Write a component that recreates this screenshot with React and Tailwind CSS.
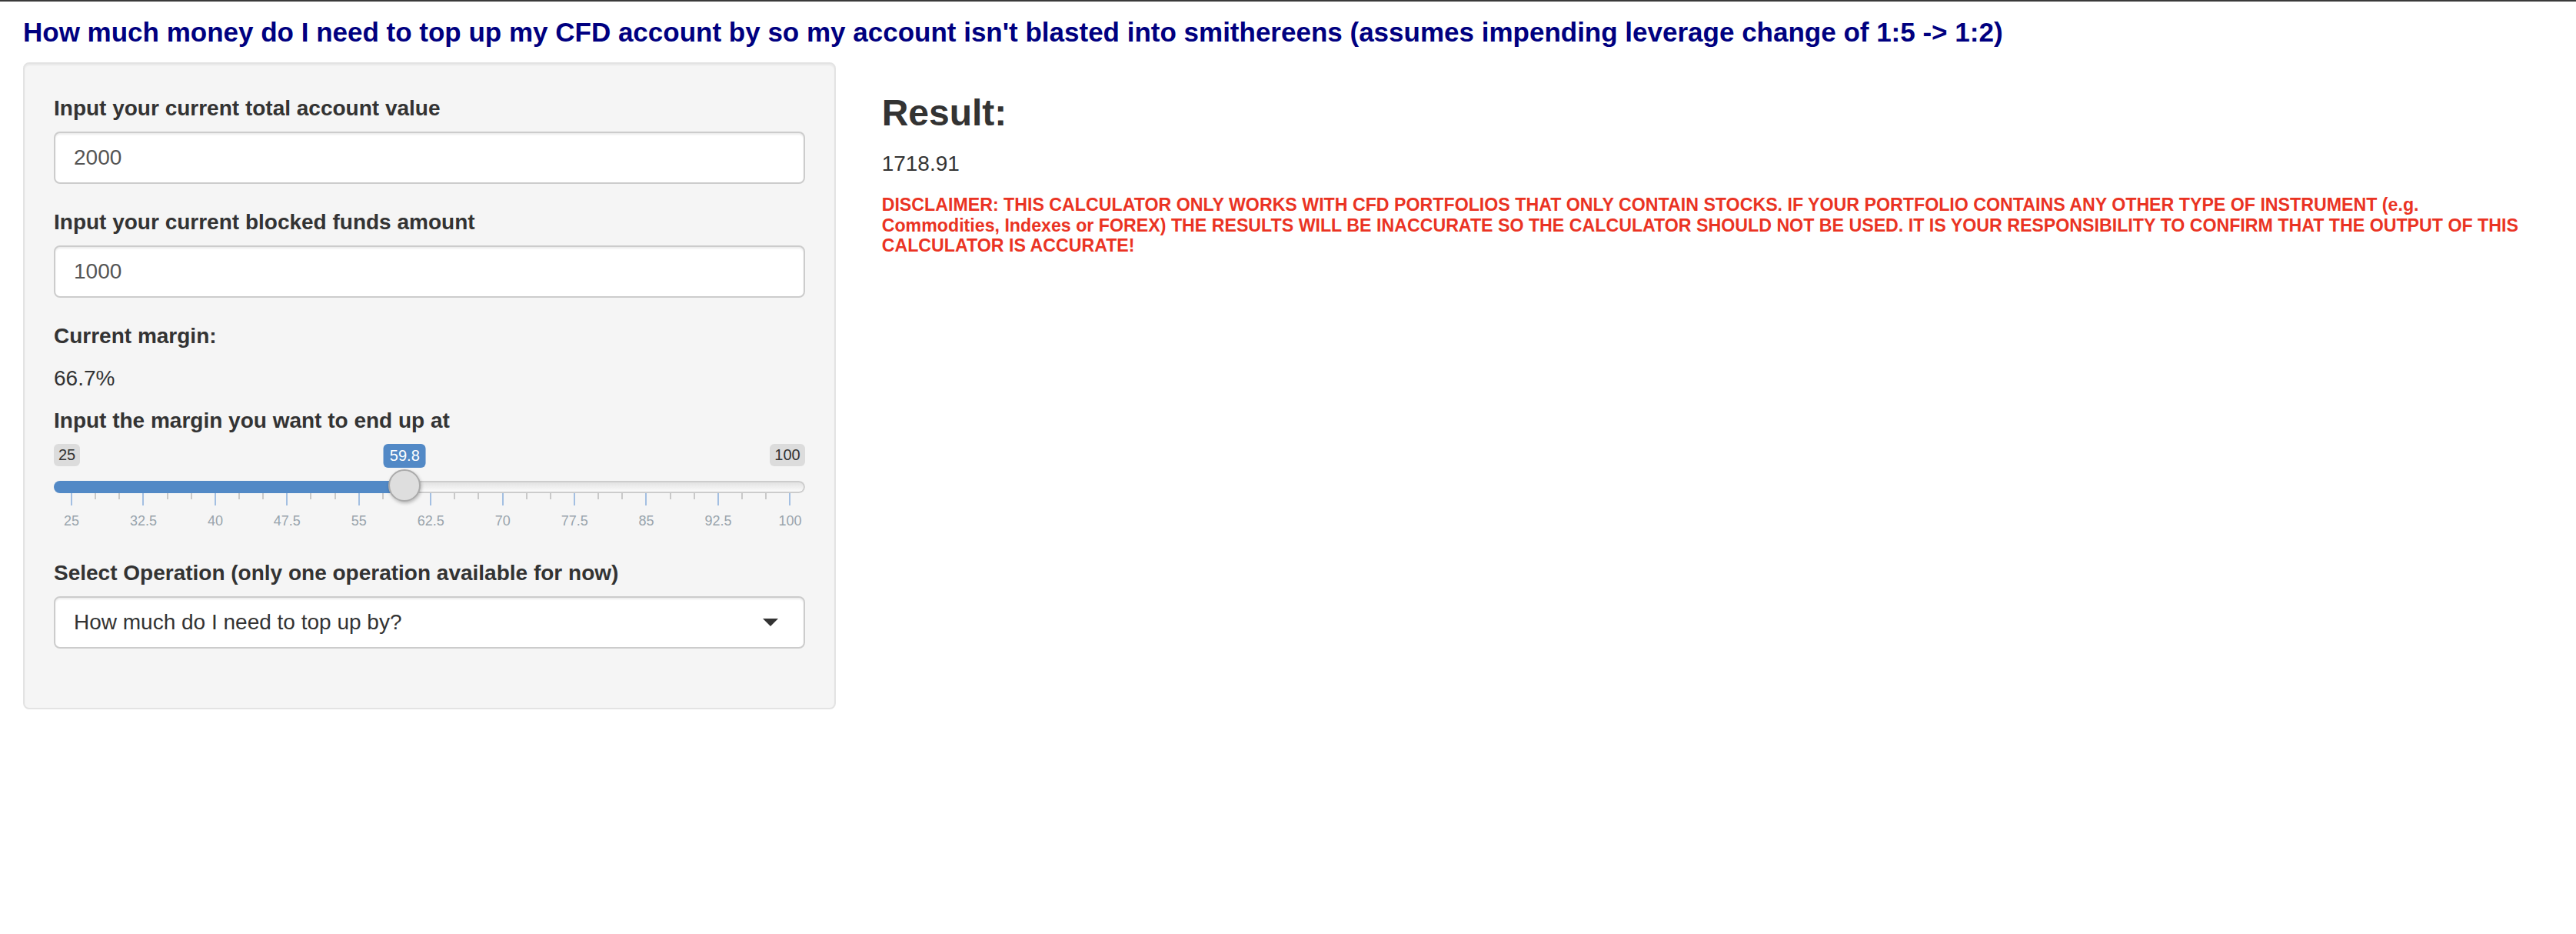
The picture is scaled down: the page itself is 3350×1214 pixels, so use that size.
import React from "react";

const gridLeft = 22.5;
const gridSpan = 935;
const pos = (v) => gridLeft + ((v - 25) / 75) * gridSpan;

const majors = [25, 32.5, 40, 47.5, 55, 62.5, 70, 77.5, 85, 92.5, 100];
const ticks = [];
for (let i = 0; i < majors.length; i++) {
  ticks.push({ major: true, key: "M" + i });
  if (i < majors.length - 1) {
    ticks.push({ major: false, key: "a" + i });
    ticks.push({ major: false, key: "b" + i });
  }
}

function Slider() {
  const value = 59.8;
  const hx = pos(value);
  return (
    <div className="relative mb-[38px] flex flex-col">
      {/* min / max labels */}
      <div className="flex h-[30px] items-start justify-between">
        <span className="rounded-[6px] bg-[#dcdcdc] px-[6px] py-[2px] text-[20px] leading-[25px] text-[#333]">25</span>
        <span className="rounded-[6px] bg-[#dcdcdc] px-[6px] py-[2px] text-[20px] leading-[25px] text-[#333]">100</span>
      </div>
      {/* value label (floats over the label row) */}
      <div
        className="absolute top-0 -translate-x-1/2 rounded-[6px] bg-[#5289c6] px-[8px] py-[3px] text-[20px] leading-[25px] text-white"
        style={{ left: hx }}
      >
        59.8
      </div>
      {/* track */}
      <div className="mt-[18px] flex h-[16px] overflow-hidden rounded-[8px]">
        <div className="h-full bg-[#5289c6]" style={{ width: hx }} />
        <div className="h-full flex-1 rounded-r-[8px] border-2 border-l-0 border-[#cccccc] bg-gradient-to-b from-[#e2e2e2] to-[#fbfbfb]" />
      </div>
      {/* handle (sits over the track) */}
      <div
        className="absolute top-[33px] h-[42px] w-[42px] -translate-x-1/2 rounded-full border-2 border-[#ababab] bg-[#dedede] shadow-[1px_2px_4px_rgba(0,0,0,0.25)]"
        style={{ left: hx }}
      />
      {/* grid ticks */}
      <div className="ml-[22px] mr-[18px] flex h-[16px] items-start justify-between">
        {ticks.map((t) =>
          t.major ? (
            <div key={t.key} className="h-[16px] w-[2px] bg-[#a3bfe2]" />
          ) : (
            <div key={t.key} className="h-[8px] w-[2px] bg-[#c9c9c9]" />
          )
        )}
      </div>
      {/* grid labels */}
      <div className="ml-[22px] mr-[18px] mt-[10px] flex justify-between">
        {majors.map((v) => (
          <div key={"t" + v} className="flex w-[2px] justify-center">
            <span className="whitespace-nowrap text-[18px] leading-[20px] text-[#99a4ac]">{String(v)}</span>
          </div>
        ))}
      </div>
    </div>
  );
}

function Label({ children }) {
  return <div className="mb-[10px] text-[28px] font-bold leading-[40px] text-[#333]">{children}</div>;
}

function TextInput({ value }) {
  return (
    <div className="mb-[30px] flex h-[68px] items-center rounded-[8px] border-2 border-[#cccccc] bg-white px-[24px] text-[28px] leading-[40px] text-[#555] shadow-[inset_0_2px_2px_rgba(0,0,0,0.075)]">
      {value}
    </div>
  );
}

export default function App() {
  return (
    <div className="min-h-[1214px] w-full bg-white font-['Liberation_Sans',Arial,sans-serif] text-[28px] leading-[40px] text-[#333]">
      <div className="h-[2px] w-full bg-[#3a3a3a]" />
      <div className="px-[30px]">
        <h4 className="mb-[19px] mt-[20px] whitespace-nowrap text-[35px] font-bold leading-[39.6px] text-[#000080]">
          How much money do I need to top up my CFD account by so my account isn't blasted into smithereens (assumes impending leverage change of 1:5 {"->"} 1:2)
        </h4>
      </div>
      <div className="flex w-full">
        <div className="w-1/3 shrink-0 px-[30px]">
          <div className="flex flex-col rounded-[8px] border-2 border-[#e3e3e3] bg-[#f5f5f5] px-[38px] pb-[77px] pt-[38px] shadow-[inset_0_2px_2px_rgba(0,0,0,0.05)]">
            <Label>Input your current total account value</Label>
            <TextInput value="2000" />
            <Label>Input your current blocked funds amount</Label>
            <TextInput value="1000" />
            <div className="text-[28px] font-bold leading-[40px]">Current margin:</div>
            <div className="my-[20px] text-[28px] leading-[30.8px]">66.7%</div>
            <Label>Input the margin you want to end up at</Label>
            <Slider />
            <Label>Select Operation (only one operation available for now)</Label>
            <div className="flex h-[68px] items-center justify-between rounded-[8px] border-2 border-[#cccccc] bg-white px-[24px] text-[28px] leading-[40px] text-[#333] shadow-[inset_0_2px_2px_rgba(0,0,0,0.075)]">
              <span>How much do I need to top up by?</span>
              <span className="mr-[9px] h-0 w-0 border-l-[10px] border-r-[10px] border-t-[10px] border-l-transparent border-r-transparent border-t-[#333]" />
            </div>
          </div>
        </div>
        <div className="flex w-2/3 flex-col px-[30px]">
          <h3 className="mb-[20px] mt-[40px] text-[48px] font-bold leading-[52.8px] text-[#333]">Result:</h3>
          <div className="text-[28px] leading-[40px]">1718.91</div>
          <h6 className="mt-[20px] max-w-[2140px] text-[23.2px] font-bold leading-[26.4px] text-[#ea3323]">
            DISCLAIMER: THIS CALCULATOR ONLY WORKS WITH CFD PORTFOLIOS THAT ONLY CONTAIN STOCKS. IF YOUR PORTFOLIO CONTAINS ANY OTHER TYPE OF INSTRUMENT (e.g. Commodities, Indexes or FOREX) THE RESULTS WILL BE INACCURATE SO THE CALCULATOR SHOULD NOT BE USED. IT IS YOUR RESPONSIBILITY TO CONFIRM THAT THE OUTPUT OF THIS CALCULATOR IS ACCURATE!
          </h6>
        </div>
      </div>
    </div>
  );
}
